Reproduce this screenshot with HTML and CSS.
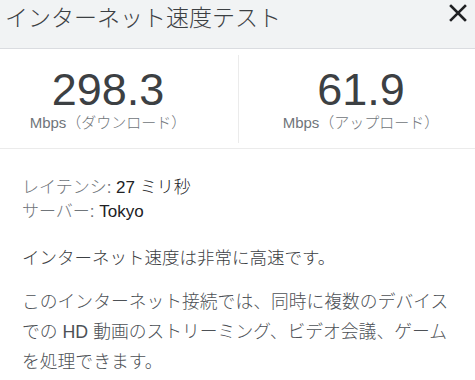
FILE: index.html
```html
<!DOCTYPE html>
<html lang="ja">
<head>
    <meta charset="UTF-8">
    <title>インターネット速度テスト</title>
    <link rel="stylesheet" href="styles.css">
</head>
<body>
    <div class="header">
        <span class="title">インターネット速度テスト</span>
        <button class="close-button" aria-label="閉じる">
            <svg width="18" height="18" viewBox="0 0 18 18">
                <path d="M2 2 L16 16 M16 2 L2 16" stroke="#202124" stroke-width="2.6" stroke-linecap="square" fill="none"/>
            </svg>
        </button>
    </div>

    <div class="results">
        <div class="result result-down">
            <div class="result-value">298.3</div>
            <div class="result-unit">Mbps（ダウンロード）</div>
        </div>
        <div class="result result-up">
            <div class="result-value">61.9</div>
            <div class="result-unit">Mbps（アップロード）</div>
        </div>
    </div>

    <div class="details">
        <div class="detail-row"><span class="detail-label">レイテンシ:</span> 27 ミリ秒</div>
        <div class="detail-row"><span class="detail-label">サーバー:</span> Tokyo</div>
        <p class="status">インターネット速度は非常に高速です。</p>
        <p class="description">このインターネット接続では、同時に複数のデバイスでの HD 動画のストリーミング、ビデオ会議、ゲームを処理できます。</p>
    </div>
</body>
</html>
```

FILE: styles.css
```css
body {
    margin: 0;
    background: #fff;
    font-family: "Liberation Sans", "Noto Sans CJK JP", sans-serif;
    color: #202124;
}
.header {
    display: flex;
    justify-content: space-between;
    align-items: flex-start;
    height: 45px;
    padding: 3px 8px 0 5px;
    background: #f1f3f4;
    border-bottom: 1px solid #dadce0;
}
.title {
    font-size: 23px;
    line-height: 30px;
    font-weight: 300;
    color: #3c4043;
}
.close-button {
    margin-top: 1px;
    padding: 0;
    width: 18px;
    height: 18px;
    border: none;
    background: transparent;
    cursor: pointer;
}
.close-button svg {
    display: block;
}
.results {
    display: flex;
    height: 99px;
    border-bottom: 1px solid #ebebeb;
}
.result {
    margin: 6px 0 5px;
    padding-top: 13px;
    text-align: center;
}
.result-down {
    width: 216px;
    padding-right: 22px;
    border-right: 1px solid #ebebeb;
}
.result-up {
    flex: 1;
    padding-left: 8px;
}
.result-value {
    font-size: 45px;
    line-height: 44px;
    color: #3c4043;
}
.result-unit {
    margin-top: 2px;
    font-size: 15px;
    line-height: 18px;
    font-weight: 300;
    color: #70757a;
}
.details {
    padding: 27px 20px 0 22px;
}
.detail-row {
    font-size: 17px;
    line-height: 24px;
    font-weight: 300;
    color: #202124;
}
.detail-label {
    color: #70757a;
}
.status {
    margin: 22px 0 0;
    font-size: 17.5px;
    line-height: 24px;
    font-weight: 300;
    color: #3c4043;
}
.description {
    margin: 17px 0 0;
    font-size: 17.8px;
    line-height: 30px;
    font-weight: 300;
    color: #4d5156;
}
```
